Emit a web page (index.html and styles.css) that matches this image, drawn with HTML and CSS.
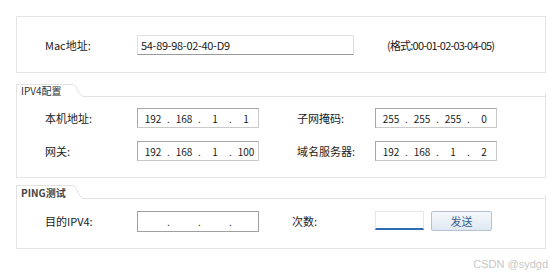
FILE: index.html
```html
<!DOCTYPE html>
<html lang="zh-CN">
<head>
    <meta charset="UTF-8">
    <title>网络配置</title>
    <link rel="stylesheet" href="styles.css">
</head>
<body>
    <div class="page">
        <div class="group group-mac">
            <div class="row">
                <span class="label">Mac地址:</span>
                <div class="edit mac-edit">54-89-98-02-40-D9</div>
                <span class="hint">(格式:00-01-02-03-04-05)</span>
            </div>
        </div>

        <div class="section section-ipv4">
            <div class="tab-head">
                <div class="tab">IPV4配置</div>
                <svg class="tab-curve" width="14" height="13" viewBox="0 0 14 13">
                    <path d="M0 0.5 H2 C6 0.5 7 12.5 13 12.5 H14" fill="none" stroke="#e2e2e2"/>
                </svg>
                <div class="tab-line"></div>
            </div>
            <div class="group group-body">
                <div class="row">
                    <span class="label">本机地址:</span>
                    <div class="edit ip-edit"><span>192</span><i>.</i><span>168</span><i>.</i><span>1</span><i>.</i><span>1</span></div>
                    <span class="label label-right">子网掩码:</span>
                    <div class="edit ip-edit"><span>255</span><i>.</i><span>255</span><i>.</i><span>255</span><i>.</i><span>0</span></div>
                </div>
                <div class="row">
                    <span class="label">网关:</span>
                    <div class="edit ip-edit"><span>192</span><i>.</i><span>168</span><i>.</i><span>1</span><i>.</i><span>100</span></div>
                    <span class="label label-right">域名服务器:</span>
                    <div class="edit ip-edit"><span>192</span><i>.</i><span>168</span><i>.</i><span>1</span><i>.</i><span>2</span></div>
                </div>
            </div>
        </div>

        <div class="section section-ping">
            <div class="tab-head">
                <div class="tab tab-bold">PING测试</div>
                <svg class="tab-curve" width="14" height="14" viewBox="0 0 14 14">
                    <path d="M0 0.5 H2 C6 0.5 7 13.5 13 13.5 H14" fill="none" stroke="#e2e2e2"/>
                </svg>
                <div class="tab-line"></div>
            </div>
            <div class="group group-body ping-body">
                <div class="row">
                    <span class="label">目的IPV4:</span>
                    <div class="edit ip-edit ping-ip"><span></span><i>.</i><span></span><i>.</i><span></span><i>.</i><span></span></div>
                    <span class="label label-count">次数:</span>
                    <div class="count-edit"></div>
                    <button class="send-btn">发送</button>
                </div>
            </div>
        </div>
    </div>
    <div class="watermark">CSDN @sydgd</div>
</body>
</html>
```

FILE: styles.css
```css
body {
    margin: 0;
    background: #ffffff;
    font-family: "Noto Sans CJK SC", "Noto Sans", sans-serif;
    font-size: 11px;
    color: #1a1a1a;
}
.page {
    width: 530px;
    padding: 16px 0 0 16px;
}
.group {
    border: 1px solid #e4e4e4;
    background: #fff;
}
.group-mac {
    height: 55px;
    display: flex;
    align-items: center;
}
.row {
    display: flex;
    align-items: center;
    height: 20px;
}
.label {
    width: 120px;
    padding-left: 28px;
    box-sizing: border-box;
    flex-shrink: 0;
}
.edit {
    box-sizing: border-box;
    height: 20px;
    display: flex;
    align-items: center;
    background: #fff;
}
.mac-edit {
    width: 217px;
    padding-left: 3px;
    border: 1px solid #e0e0e0;
    border-bottom: 1px solid #9a9a9a;
    letter-spacing: -0.3px;
}
.hint {
    margin-left: 33px;
    letter-spacing: -0.8px;
}
.section-ipv4 {
    margin-top: 11px;
}
.section-ping {
    margin-top: 7px;
}
.tab-head {
    display: flex;
    align-items: flex-end;
}
.tab {
    border-top: 1px solid #e2e2e2;
    border-left: 1px solid #e2e2e2;
    padding: 0 0 0 4px;
    width: 50px;
    height: 12px;
    line-height: 12px;
    font-size: 10px;
    color: #333;
}
.tab-bold {
    font-weight: bold;
    height: 13px;
    line-height: 14px;
    color: #444;
}
.tab-curve {
    display: block;
    flex-shrink: 0;
}
.tab-line {
    flex: 1;
    border-bottom: 1px solid #e2e2e2;
    border-right: 1px solid #e2e2e2;
    height: 3px;
}
.group-body {
    border-top: none;
    display: flex;
    flex-direction: column;
    gap: 13px;
    padding: 11px 0 16px;
}
.ping-body {
    padding: 12px 0 17px;
}
.ip-edit {
    width: 122px;
    padding-left: 4px;
    border: 1px solid #a7a7a7;
    border-right-color: #c9c9c9;
    border-bottom-color: #c9c9c9;
    font-size: 10px;
}
.ip-edit span {
    width: 22px;
    text-align: center;
}
.ip-edit i {
    font-style: normal;
    width: 9px;
    text-align: center;
}
.label-right {
    width: 116px;
    padding-left: 38px;
}
.label-count {
    width: 116px;
    padding-left: 33px;
}
.ping-ip {
    height: 21px;
    border-color: #a0a0a0;
}
.count-edit {
    box-sizing: border-box;
    width: 49px;
    height: 19px;
    border: 1px solid #e6e6e6;
    border-bottom: 2px solid #2d6cb5;
    margin-top: -1px;
}
.send-btn {
    margin-left: 7px;
    width: 61px;
    height: 20px;
    padding: 0;
    border: 1px solid #b3c2d2;
    border-radius: 2px;
    background: linear-gradient(#f6f9fc, #dfe8f1);
    font-family: "Noto Sans CJK SC", sans-serif;
    font-size: 11px;
    color: #3b5d8f;
}
.watermark {
    position: absolute;
    right: 6px;
    top: 258px;
    font-family: "Liberation Sans", sans-serif;
    font-size: 11px;
    color: #c7c7c7;
}
```
